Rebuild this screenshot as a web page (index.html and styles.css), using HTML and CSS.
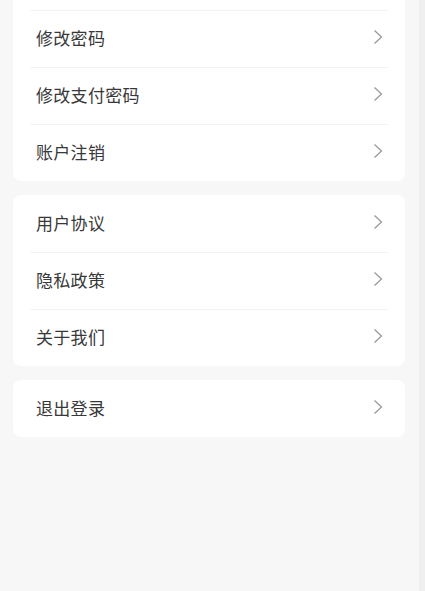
FILE: index.html
```html
<!DOCTYPE html>
<html lang="zh-CN">
<head>
    <meta charset="UTF-8">
    <meta name="viewport" content="width=device-width, initial-scale=1.0">
    <title>设置</title>
    <link rel="stylesheet" href="styles.css">
</head>
<body>
    <div class="page">
        <div class="list">
            <div class="card">
                <div class="row"></div>
                <div class="row"><span>修改密码</span><svg class="arrow" viewBox="0 0 10 16"><polyline points="1.5,1.5 8.5,8 1.5,14.5"/></svg></div>
                <div class="row"><span>修改支付密码</span><svg class="arrow" viewBox="0 0 10 16"><polyline points="1.5,1.5 8.5,8 1.5,14.5"/></svg></div>
                <div class="row"><span>账户注销</span><svg class="arrow" viewBox="0 0 10 16"><polyline points="1.5,1.5 8.5,8 1.5,14.5"/></svg></div>
            </div>

            <div class="card">
                <div class="row"><span>用户协议</span><svg class="arrow" viewBox="0 0 10 16"><polyline points="1.5,1.5 8.5,8 1.5,14.5"/></svg></div>
                <div class="row"><span>隐私政策</span><svg class="arrow" viewBox="0 0 10 16"><polyline points="1.5,1.5 8.5,8 1.5,14.5"/></svg></div>
                <div class="row"><span>关于我们</span><svg class="arrow" viewBox="0 0 10 16"><polyline points="1.5,1.5 8.5,8 1.5,14.5"/></svg></div>
            </div>

            <div class="card">
                <div class="row"><span>退出登录</span><svg class="arrow" viewBox="0 0 10 16"><polyline points="1.5,1.5 8.5,8 1.5,14.5"/></svg></div>
            </div>
        </div>
    </div>
</body>
</html>
```

FILE: styles.css
```css
html, body {
    margin: 0;
    padding: 0;
    height: 100%;
    overflow: hidden;
}

body {
    font-family: "Noto Sans CJK SC", "Noto Sans", sans-serif;
    background-color: #efefef;
    color: #383838;
}

.page {
    display: flex;
    flex-direction: column;
    width: 419px;
    height: 100%;
    background-color: #f7f7f7;
}

.list {
    display: flex;
    flex-direction: column;
    gap: 14px;
    padding: 0 14px 0 13px;
    margin-top: -47px;
}

.card {
    background-color: #ffffff;
    border-radius: 8px;
}

.row {
    display: flex;
    align-items: center;
    justify-content: space-between;
    box-sizing: border-box;
    height: 57px;
    padding: 0 22px 3px 23px;
    position: relative;
    font-size: 17px;
    letter-spacing: 0.3px;
}

.row + .row::before {
    content: "";
    position: absolute;
    top: 0;
    left: 17px;
    right: 17px;
    height: 1px;
    background-color: #f3f3f3;
}

.arrow {
    width: 10px;
    height: 16px;
    fill: none;
    stroke: #9a9a9a;
    stroke-width: 1.3;
}
```
